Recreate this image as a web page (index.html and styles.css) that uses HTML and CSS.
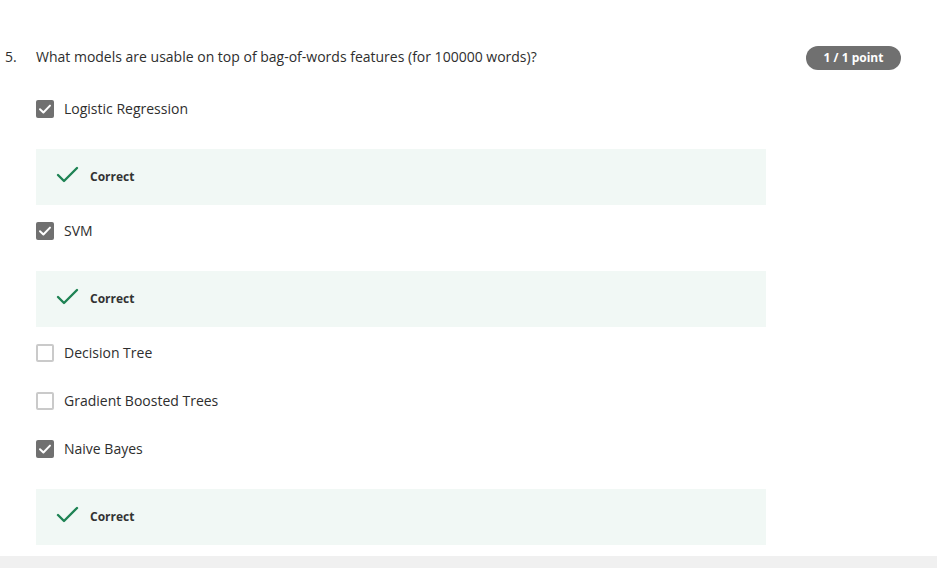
FILE: index.html
```html
<!DOCTYPE html>
<html>
<head>
<meta charset="utf-8">
<link rel="stylesheet" href="styles.css">
</head>
<body>
<main class="page">
  <div class="question">
    <span class="qnum">5.</span>
    <span class="qtext">What models are usable on top of bag-of-words features (for 100000 words)?</span>
    <span class="badge">1 / 1 point</span>
  </div>
  <div class="options">
    <div class="option"><span class="box checked"><svg viewBox="0 0 18 18" width="18" height="18"><path d="M4 9.2 L7.4 12.5 L14 5.6" fill="none" stroke="#fff" stroke-width="2" stroke-linecap="round" stroke-linejoin="round"/></svg></span><span class="label">Logistic Regression</span></div>
    <div class="feedback"><svg class="tick" viewBox="0 0 24 20" width="24" height="20"><path d="M2 9 L8 15 L21 2" fill="none" stroke="#1f8354" stroke-width="2.4" stroke-linecap="round" stroke-linejoin="round"/></svg><span>Correct</span></div>
    <div class="option"><span class="box checked"><svg viewBox="0 0 18 18" width="18" height="18"><path d="M4 9.2 L7.4 12.5 L14 5.6" fill="none" stroke="#fff" stroke-width="2" stroke-linecap="round" stroke-linejoin="round"/></svg></span><span class="label">SVM</span></div>
    <div class="feedback"><svg class="tick" viewBox="0 0 24 20" width="24" height="20"><path d="M2 9 L8 15 L21 2" fill="none" stroke="#1f8354" stroke-width="2.4" stroke-linecap="round" stroke-linejoin="round"/></svg><span>Correct</span></div>
    <div class="option"><span class="box"></span><span class="label">Decision Tree</span></div>
    <div class="option"><span class="box"></span><span class="label">Gradient Boosted Trees</span></div>
    <div class="option"><span class="box checked"><svg viewBox="0 0 18 18" width="18" height="18"><path d="M4 9.2 L7.4 12.5 L14 5.6" fill="none" stroke="#fff" stroke-width="2" stroke-linecap="round" stroke-linejoin="round"/></svg></span><span class="label">Naive Bayes</span></div>
    <div class="feedback"><svg class="tick" viewBox="0 0 24 20" width="24" height="20"><path d="M2 9 L8 15 L21 2" fill="none" stroke="#1f8354" stroke-width="2.4" stroke-linecap="round" stroke-linejoin="round"/></svg><span>Correct</span></div>
  </div>
</main>
<footer class="footer"></footer>
</body>
</html>
```

FILE: styles.css
```css
html, body {
  margin: 0;
  padding: 0;
  background: #fff;
  overflow: hidden;
}
body {
  font-family: "Open Sans", "Liberation Sans", sans-serif;
  color: #333;
}
.page {
  height: 556px;
  box-sizing: border-box;
  padding: 45px 36px 0 0;
}
.question {
  display: flex;
  align-items: center;
  height: 24px;
  font-size: 14px;
  color: #2e2e2e;
}
.qnum {
  width: 31px;
  padding-left: 5px;
  flex: none;
  line-height: 20px;
  padding-bottom: 1px;
}
.qtext {
  flex: 1;
  line-height: 20px;
  padding-bottom: 1px;
}
.badge {
  flex: none;
  width: 95px;
  height: 24px;
  box-sizing: border-box;
  padding-bottom: 2px;
  border-radius: 12px;
  background: #707070;
  color: #fff;
  font-size: 12px;
  font-weight: 700;
  display: flex;
  align-items: center;
  justify-content: center;
  margin-top: 2px;
}
.options {
  display: flex;
  flex-direction: column;
  margin-top: 16px;
  padding-left: 36px;
}
.option {
  display: flex;
  align-items: center;
  height: 48px;
  font-size: 14px;
  color: #2e2e2e;
}
.label {
  line-height: 20px;
  padding-bottom: 1px;
}
.box {
  width: 18px;
  height: 18px;
  box-sizing: border-box;
  border: 2px solid #cacaca;
  border-radius: 2px;
  margin-right: 10px;
  flex: none;
}
.box.checked {
  border: none;
  background: #707070;
}
.box svg {
  display: block;
}
.feedback {
  width: 730px;
  height: 56px;
  background: #f1f8f5;
  margin: 16px 0 2px;
  display: flex;
  align-items: center;
  padding-left: 20px;
  box-sizing: border-box;
  font-size: 12px;
  font-weight: 700;
  color: #333;
}
.feedback span {
  line-height: 18px;
  padding-bottom: 1px;
}
.tick {
  display: block;
  margin-right: 10px;
  margin-top: -2px;
}
.footer {
  height: 12px;
  background: #f0f0f0;
}
```
